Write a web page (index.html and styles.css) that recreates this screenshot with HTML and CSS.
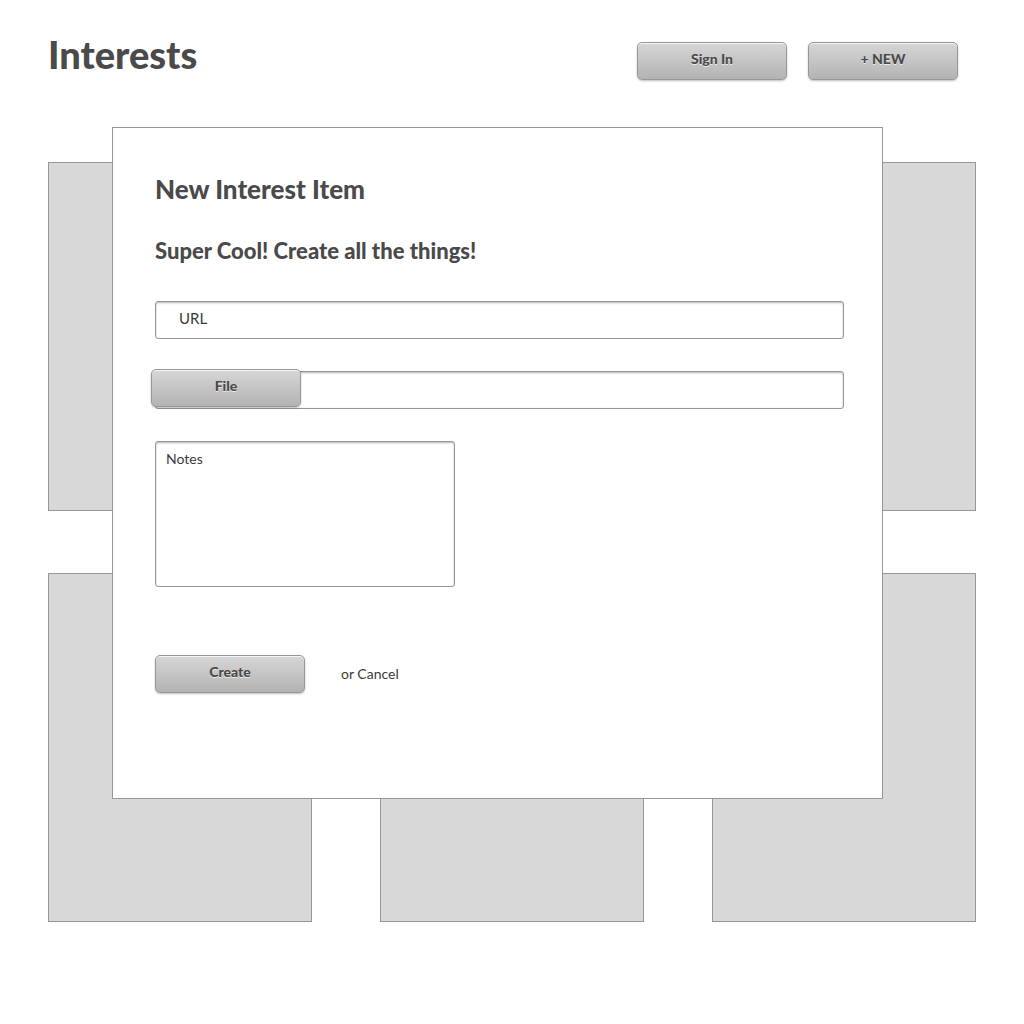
FILE: index.html
```html
<!DOCTYPE html>
<html lang="en">
<head>
  <meta charset="utf-8">
  <meta name="viewport" content="width=device-width, initial-scale=1">
  <title>Interests</title>
  <link rel="stylesheet" href="styles.css">
</head>
<body>
  <header class="site-header">
    <h1 class="site-title">Interests</h1>
    <nav class="site-actions">
      <button class="button" type="button">Sign In</button>
      <button class="button" type="button">+ NEW</button>
    </nav>
  </header>

  <main class="tiles">
    <div class="tile"></div>
    <div class="tile"></div>
    <div class="tile"></div>
    <div class="tile"></div>
    <div class="tile"></div>
    <div class="tile"></div>
  </main>

  <section class="modal" role="dialog" aria-labelledby="modal-title">
    <h2 class="modal-title" id="modal-title">New Interest Item</h2>
    <h3 class="modal-subtitle">Super Cool! Create all the things!</h3>
    <form class="form">
      <input class="field" type="text" name="url" placeholder="URL" aria-label="URL">
      <div class="file-row">
        <input class="field" type="text" name="file" aria-label="File" readonly>
        <button class="button file-button" type="button">File</button>
      </div>
      <textarea class="field notes" name="notes" placeholder="Notes" aria-label="Notes"></textarea>
      <div class="form-actions">
        <button class="button" type="submit">Create</button>
        <span>or <a class="cancel" href="#">Cancel</a></span>
      </div>
    </form>
  </section>
</body>
</html>
```
FILE: styles.css
```css
* {
  box-sizing: border-box;
}

body {
  position: relative;
  margin: 0;
  padding: 42px 48px 102px;
  background: #fff;
  color: #3a3a3a;
  font: 14px/20px Lato, "Open Sans", sans-serif;
}

h1,
h2,
h3 {
  margin: 0;
  color: #4a4a4a;
  font-family: "Lato Black", Lato, "Open Sans", sans-serif;
  font-weight: 900;
}

.site-header {
  display: flex;
  align-items: flex-start;
  justify-content: space-between;
  padding-right: 18px;
  margin-bottom: 82px;
}

.site-title {
  font-size: 38px;
  line-height: 24px;
}

.site-actions {
  display: flex;
  gap: 21px;
}

.button {
  width: 150px;
  height: 38px;
  padding: 0 0 4px;
  border: 1px solid #979797;
  border-radius: 5px;
  background: linear-gradient(#d6d6d6, #b3b3b3);
  box-shadow: inset 0 1px 0 #f4f4f4, 0 1px 2px rgba(0, 0, 0, 0.25);
  color: #4a4a4a;
  font: 900 14px/20px "Lato Black", Lato, "Open Sans", sans-serif;
  text-shadow: 0 1px 0 rgba(255, 255, 255, 0.7);
  cursor: pointer;
}

.tiles {
  display: grid;
  grid-template-columns: repeat(3, 1fr);
  gap: 62px 68px;
}

.tile {
  height: 349px;
  border: 1px solid #979797;
  background: #d8d8d8;
}

.modal {
  position: absolute;
  top: 127px;
  left: 112px;
  right: 141px;
  padding: 45px 38px 105px 42px;
  border: 1px solid #979797;
  background: #fff;
}

.modal-title {
  margin-bottom: 30px;
  font-size: 26px;
  line-height: 32px;
}

.modal-subtitle {
  margin-bottom: 34px;
  font-size: 22px;
  line-height: 32px;
}

.form {
  display: flex;
  flex-direction: column;
  gap: 32px;
}

.field {
  display: block;
  width: 100%;
  height: 38px;
  padding: 0 23px 5px;
  border: 1px solid #979797;
  border-radius: 3px;
  background: #fff;
  box-shadow: inset 0 1px 2px rgba(0, 0, 0, 0.3);
  color: #3a3a3a;
  font: 15px/20px Lato, "Open Sans", sans-serif;
}

.field::placeholder {
  color: #3a3a3a;
  opacity: 1;
}

.file-row {
  position: relative;
}

.file-button {
  position: absolute;
  top: -2px;
  left: -4px;
}

.notes {
  width: 300px;
  height: 146px;
  padding: 7px 10px;
  font-size: 14px;
  resize: none;
}

.form-actions {
  display: flex;
  align-items: center;
  gap: 36px;
  margin-top: 36px;
}

.cancel {
  color: inherit;
  text-decoration: none;
}
```
